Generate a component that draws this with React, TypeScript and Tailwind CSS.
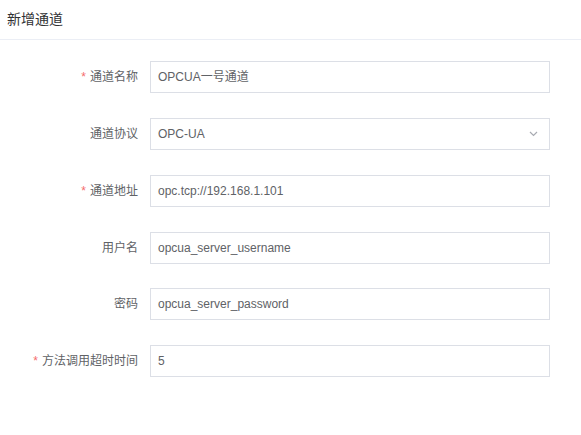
import React from "react";

const font = { fontFamily: '"Liberation Sans", "Noto Sans CJK SC", sans-serif' };

type Row = { label: string; value: string; required?: boolean; select?: boolean; mt: string };

const rows: Row[] = [
  { label: "通道名称", value: "OPCUA一号通道", required: true, mt: "mt-[21px]" },
  { label: "通道协议", value: "OPC-UA", select: true, mt: "mt-[25px]" },
  { label: "通道地址", value: "opc.tcp://192.168.1.101", required: true, mt: "mt-[25px]" },
  { label: "用户名", value: "opcua_server_username", mt: "mt-[25px]" },
  { label: "密码", value: "opcua_server_password", mt: "mt-[24px]" },
  { label: "方法调用超时时间", value: "5", required: true, mt: "mt-[25px]" },
];

export default function App() {
  return (
    <div className="w-[581px] h-[435px] bg-white" style={font}>
      <div className="h-[40px] px-[7px] flex items-center border-b border-[#ebeef5] text-[14px] text-[#303133]">
        新增通道
      </div>
      <div className="flex flex-col">
        {rows.map((r) => (
          <div key={r.label} className={`flex items-center h-[32px] ${r.mt}`}>
            <div className="w-[138px] flex justify-end items-center text-[12px] text-[#606266]">
              {r.required && <span className="text-[#f56c6c] mr-[4px] text-[12px]">*</span>}
              {r.label}
            </div>
            <div className="ml-[12px] w-[400px] h-[32px] border border-[#dcdfe6] flex items-center px-[7px] text-[12px] text-[#606266] justify-between">
              <span>{r.value}</span>
              {r.select && (
                <svg width="9" height="6" viewBox="0 0 9 6" className="mr-[4px]">
                  <path d="M1 1 L4.5 4.5 L8 1" fill="none" stroke="#a8abb2" strokeWidth="1.2" />
                </svg>
              )}
            </div>
          </div>
        ))}
      </div>
    </div>
  );
}
